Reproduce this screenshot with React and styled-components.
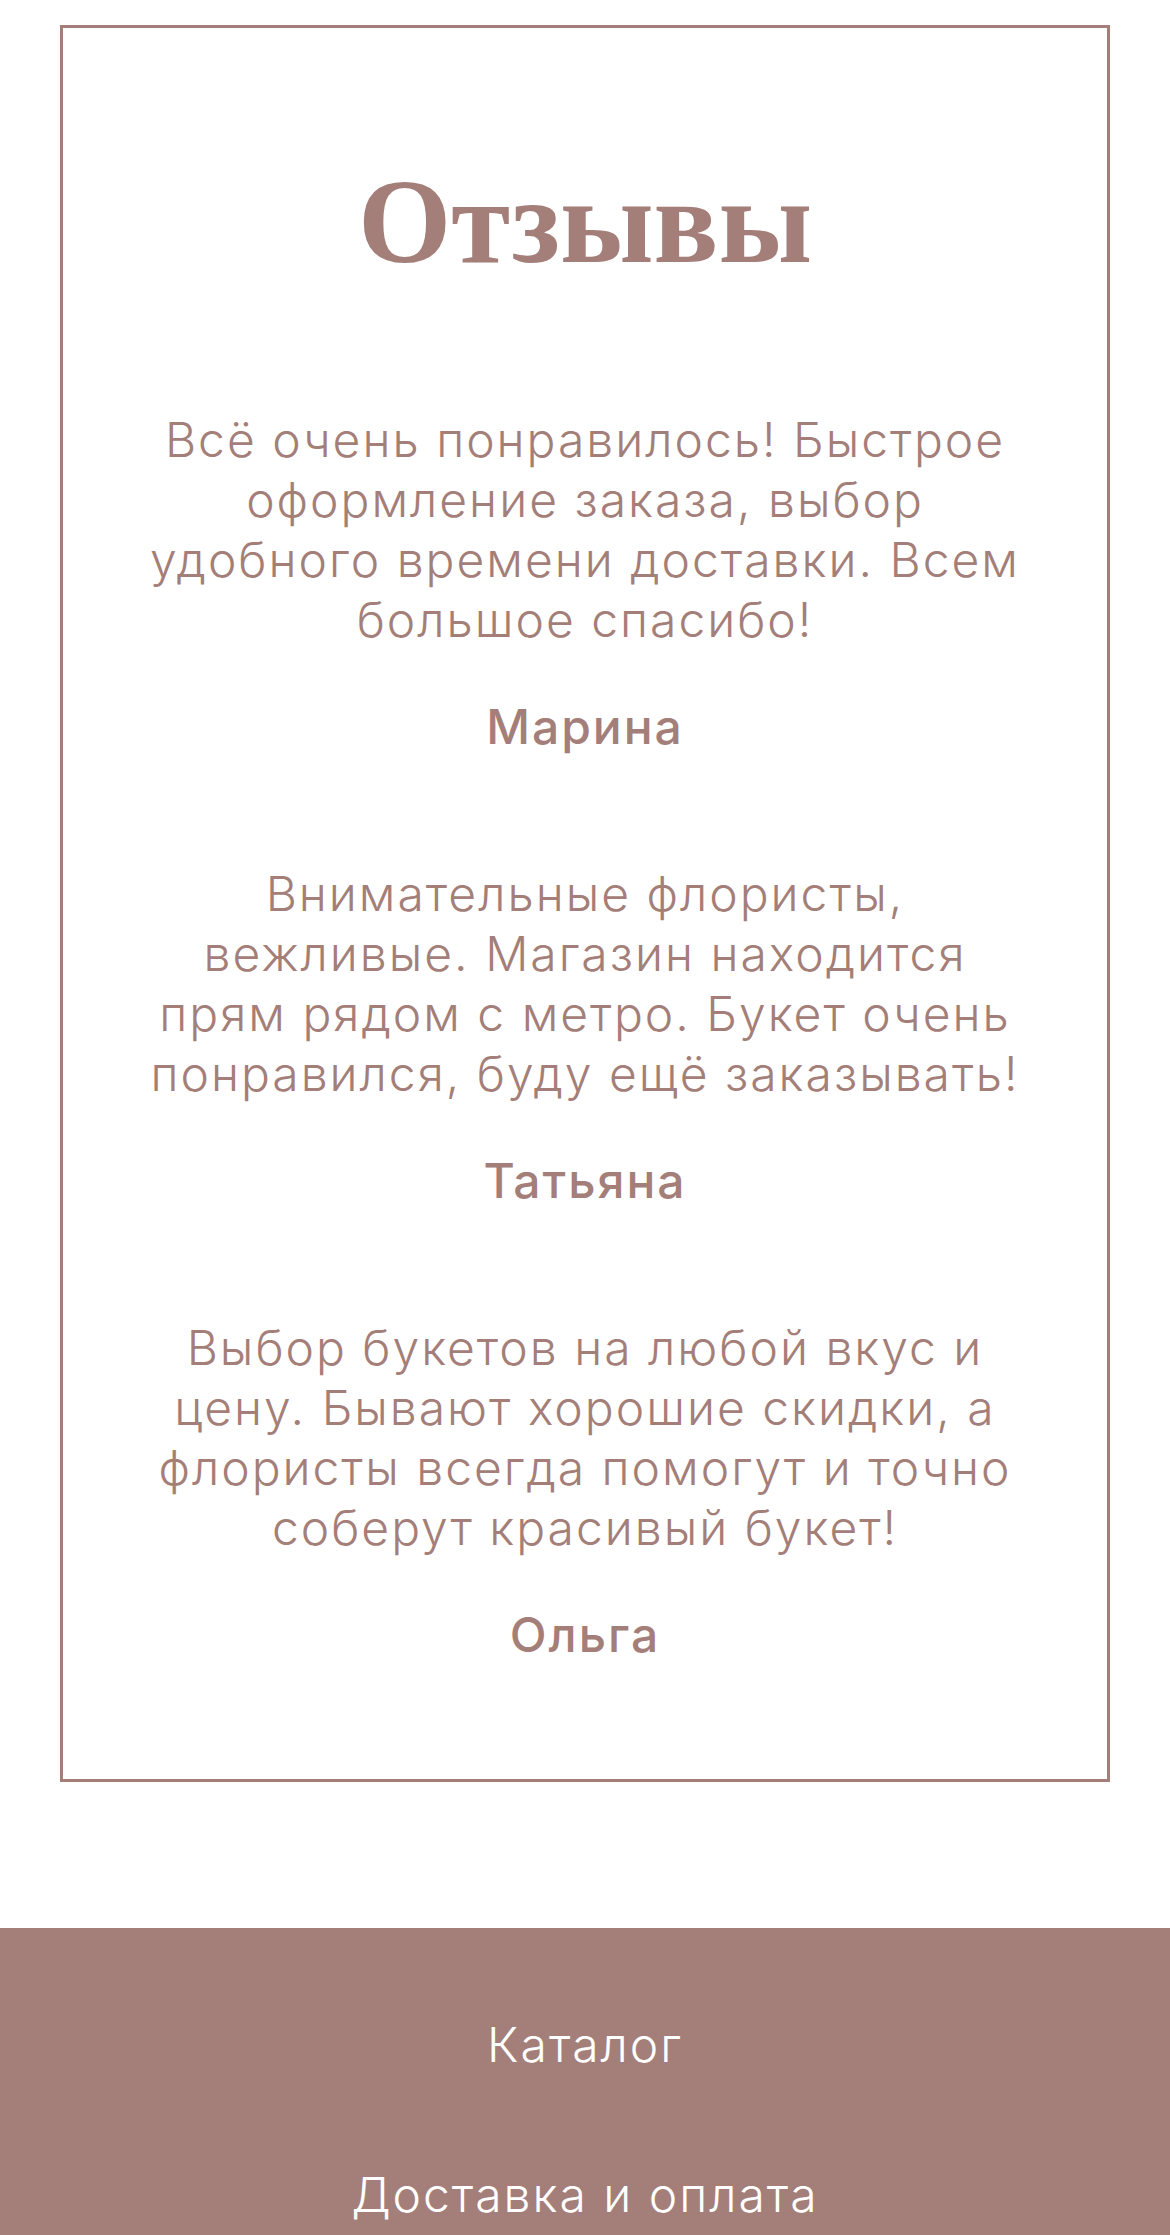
import React from "react";
import styled, {createGlobalStyle} from "styled-components";

const reviews = [
  {
    id: 1,
    text: "Всё очень понравилось! Быстрое оформление заказа, выбор удобного времени доставки. Всем большое спасибо!",
    author: "Марина"
  },
  {
    id: 2,
    text: "Внимательные флористы, вежливые. Магазин находится прям рядом с метро. Букет очень понравился, буду ещё заказывать!",
    author: "Татьяна"
  },
  {
    id: 3,
    text: "Выбор букетов на любой вкус и цену. Бывают хорошие скидки, а флористы всегда помогут и точно соберут красивый букет!",
    author: "Ольга"
  }
];

const links = ["Каталог", "Доставка и оплата"];

const App = () => {
  return (
    <>
      <GlobalStyle />
      <Page>
        <ReviewsSection>
          <Frame>
            <Title>Отзывы</Title>
            <ReviewList>
              {reviews.map(review => (
                <Review key={review.id}>
                  <ReviewText>{review.text}</ReviewText>
                  <Author>{review.author}</Author>
                </Review>
              ))}
            </ReviewList>
          </Frame>
        </ReviewsSection>
        <Footer>
          <FooterNav>
            {links.map(link => (
              <FooterLink key={link} href="#">{link}</FooterLink>
            ))}
          </FooterNav>
        </Footer>
      </Page>
    </>
  );
};

const accent = "#a47e78";

const GlobalStyle = createGlobalStyle`
  * {
    box-sizing: border-box;
  }
  body {
    margin: 0;
    background: #ffffff;
    font-family: Inter, "Open Sans", sans-serif;
  }
`;

const Page = styled.div`
  display: flex;
  flex-direction: column;
  min-height: 2235px;
  overflow: hidden;
`;

const ReviewsSection = styled.section`
  padding: 25px 60px 146px;
`;

const Frame = styled.div`
  border: 3px solid ${accent};
  padding: 122px 0 114px;
  display: flex;
  flex-direction: column;
  align-items: center;
`;

const Title = styled.h2`
  margin: 0;
  font-family: "Liberation Serif", "DejaVu Serif", serif;
  font-weight: 700;
  font-size: 120px;
  line-height: 144px;
  color: ${accent};
  text-align: center;
`;

const ReviewList = styled.div`
  margin-top: 116px;
  display: flex;
  flex-direction: column;
  gap: 107px;
  width: 100%;
  padding: 0 82px;
`;

const Review = styled.article`
  display: flex;
  flex-direction: column;
  align-items: center;
  gap: 47px;
  text-align: center;
  color: ${accent};
  letter-spacing: 2px;
`;

const ReviewText = styled.p`
  margin: 0;
  font-size: 48px;
  font-weight: 300;
  line-height: 60px;
`;

const Author = styled.p`
  margin: 0;
  font-size: 48px;
  font-weight: 500;
  line-height: 60px;
`;

const Footer = styled.footer`
  flex: 1;
  background: ${accent};
  padding: 87px 20px 0;
`;

const FooterNav = styled.nav`
  display: flex;
  flex-direction: column;
  align-items: center;
  gap: 90px;
`;

const FooterLink = styled.a`
  color: #ffffff;
  text-decoration: none;
  font-size: 48px;
  font-weight: 300;
  line-height: 60px;
  letter-spacing: 2px;
`;

export default App;
